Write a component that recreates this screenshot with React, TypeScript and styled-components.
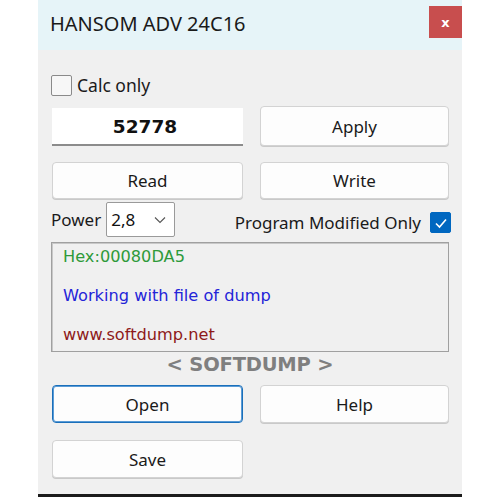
import React from "react";
import styled, { createGlobalStyle } from "styled-components";

const GlobalStyle = createGlobalStyle`
  html, body {
    margin: 0;
    padding: 0;
    background: #ffffff;
  }
  body {
    font-family: "Noto Sans", "Open Sans", sans-serif;
  }
`;

const Page = styled.div`
  width: 500px;
  height: 500px;
  padding-left: 38px;
  box-sizing: border-box;
`;

const Window = styled.div`
  width: 424px;
  height: 497px;
  box-sizing: border-box;
  background: #f0f0f0;
  border-bottom: 3px solid #1b1b1b;
  display: flex;
  flex-direction: column;
`;

const TitleBar = styled.div`
  height: 50px;
  background: #e6f4f8;
  display: flex;
  align-items: center;
  justify-content: space-between;
  padding-left: 12px;
  box-sizing: border-box;
`;

const Title = styled.span`
  font-size: 20px;
  color: #1a1a1a;
  margin-top: -4px;
`;

const Close = styled.div`
  width: 33px;
  height: 32px;
  background: #c84e4e;
  color: #fff;
  font-family: "DejaVu Sans", sans-serif;
  font-weight: bold;
  font-size: 13px;
  display: flex;
  align-items: center;
  justify-content: center;
  margin-top: -6px;
`;

const Body = styled.div`
  padding: 0 13px 0 13px;
  display: flex;
  flex-direction: column;
`;

const CheckRow = styled.label<{ $top: number }>`
  display: flex;
  align-items: center;
  gap: 5px;
  font-size: 17.5px;
  color: #1a1a1a;
  margin-top: ${(p) => p.$top}px;
`;

const Box = styled.span<{ $checked?: boolean }>`
  width: 21px;
  height: 21px;
  box-sizing: border-box;
  border: 1px solid ${(p) => (p.$checked ? "#0067c0" : "#8a8a8a")};
  background: ${(p) => (p.$checked ? "#0067c0" : "#f7f7f7")};
  border-radius: 2px;
  display: flex;
  align-items: center;
  justify-content: center;
`;

const Grid = styled.div<{ $top: number; $h: number }>`
  display: grid;
  grid-template-columns: 191px 189px;
  column-gap: 17px;
  margin-top: ${(p) => p.$top}px;
  height: ${(p) => p.$h}px;
  padding-left: 1px;
`;

const Button = styled.div<{ $focus?: boolean }>`
  box-sizing: border-box;
  background: #fdfdfd;
  border: 1px solid ${(p) => (p.$focus ? "#1a6fba" : "#d3d3d3")};
  box-shadow: ${(p) => (p.$focus ? "inset 0 0 0 1px #5a9bd6" : "0 1px 0 #c9c9c9")};
  border-radius: 4px;
  display: flex;
  align-items: center;
  justify-content: center;
  font-size: 17px;
  color: #1a1a1a;
`;

const ValueBox = styled.div`
  box-sizing: border-box;
  background: #ffffff;
  border-bottom: 2px solid #8c8c8c;
  display: flex;
  align-items: center;
  justify-content: center;
  padding-right: 5px;
  font-family: "DejaVu Sans", sans-serif;
  font-weight: bold;
  font-size: 18.5px;
  color: #111;
  margin-top: 2px;
`;

const PowerRow = styled.div`
  display: flex;
  align-items: center;
  margin-top: 3px;
  height: 35px;
`;

const Label = styled.span`
  font-size: 17px;
  color: #1a1a1a;
`;

const Select = styled.div`
  width: 69px;
  height: 35px;
  box-sizing: border-box;
  margin-left: 5px;
  background: #fff;
  border: 1px solid #9a9a9a;
  border-radius: 2px;
  display: flex;
  align-items: center;
  justify-content: space-between;
  padding: 0 8px 0 4px;
  font-size: 17px;
  color: #111;
`;

const Spacer = styled.div`
  flex: 1;
`;

const ModRow = styled.div`
  display: flex;
  align-items: center;
  gap: 9px;
  margin-right: -2px;
  margin-top: 6px;
`;

const Log = styled.div`
  margin-top: 5px;
  height: 110px;
  box-sizing: border-box;
  border: 1px solid #a0a0a0;
  box-shadow: inset 1px 1px 0 #c8c8c8;
  padding: 2px 0 0 11px;
  display: flex;
  flex-direction: column;
  overflow: hidden;
  font-family: "DejaVu Sans", sans-serif;
  font-size: 16.2px;
`;

const LogLine = styled.div<{ $color: string }>`
  color: ${(p) => p.$color};
  flex-shrink: 0;
  height: 39px;
  line-height: 24px;
`;

const Brand = styled.div`
  text-align: center;
  font-family: "DejaVu Sans", sans-serif;
  font-weight: bold;
  font-size: 19.5px;
  color: #7f7f7f;
  margin-top: 1px;
  height: 29px;
  line-height: 24px;
  letter-spacing: -0.2px;
`;

const Check = () => (
  <svg width="14" height="12" viewBox="0 0 14 12">
    <path d="M2 6.5 L5.5 10 L12 2.5" fill="none" stroke="#fff" strokeWidth="1.6" />
  </svg>
);

const Chevron = () => (
  <svg width="12" height="8" viewBox="0 0 12 8">
    <path d="M1 1.5 L6 6.5 L11 1.5" fill="none" stroke="#555" strokeWidth="1.1" />
  </svg>
);

export default function App() {
  return (
    <Page>
      <GlobalStyle />
      <Window>
        <TitleBar>
          <Title>HANSOM ADV 24C16</Title>
          <Close>x</Close>
        </TitleBar>
        <Body>
          <CheckRow $top={23}>
            <Box />
            Calc only
          </CheckRow>
          <Grid $top={9} $h={40}>
            <ValueBox>52778</ValueBox>
            <Button>Apply</Button>
          </Grid>
          <Grid $top={16} $h={37}>
            <Button>Read</Button>
            <Button>Write</Button>
          </Grid>
          <PowerRow>
            <Label>Power</Label>
            <Select>
              <span>2,8</span>
              <Chevron />
            </Select>
            <Spacer />
            <ModRow>
              <Label>Program Modified Only</Label>
              <Box $checked>
                <Check />
              </Box>
            </ModRow>
          </PowerRow>
          <Log>
            <LogLine $color="#2e9a3a">Hex:00080DA5</LogLine>
            <LogLine $color="#2424d8">Working with file of dump</LogLine>
            <LogLine $color="#8e1a1a">www.softdump.net</LogLine>
          </Log>
          <Brand>&lt; SOFTDUMP &gt;</Brand>
          <Grid $top={3} $h={38}>
            <Button $focus>Open</Button>
            <Button>Help</Button>
          </Grid>
          <Grid $top={17} $h={38}>
            <Button>Save</Button>
          </Grid>
        </Body>
      </Window>
    </Page>
  );
}
